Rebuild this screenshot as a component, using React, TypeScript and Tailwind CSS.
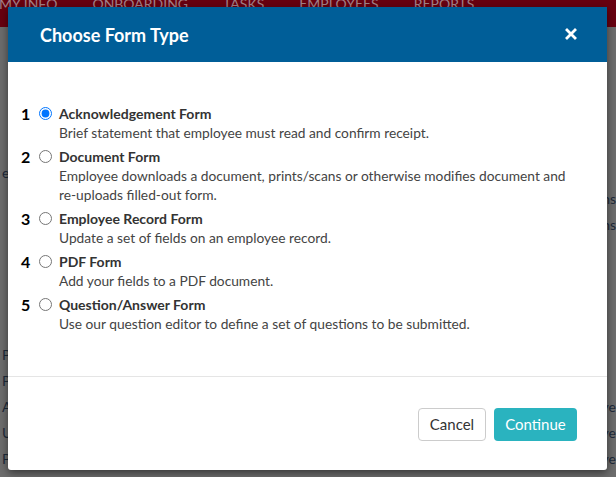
import React from "react";

const items = [
  { n: "1", title: "Acknowledgement Form", desc: ["Brief statement that employee must read and confirm receipt."], checked: true },
  { n: "2", title: "Document Form", desc: ["Employee downloads a document, prints/scans or otherwise modifies document and", "re-uploads filled-out form."] },
  { n: "3", title: "Employee Record Form", desc: ["Update a set of fields on an employee record."] },
  { n: "4", title: "PDF Form", desc: ["Add your fields to a PDF document."] },
  { n: "5", title: "Question/Answer Form", desc: ["Use our question editor to define a set of questions to be submitted."] },
];

const bgRows: [string, string][] = [
  ["es", ""],
  ["", "ns"],
  ["", "ns"],
  ["", ""],
  ["", ""],
  ["", ""],
  ["", ""],
  ["P", ""],
  ["P", ""],
  ["A", "ye"],
  ["U", "ye"],
  ["P", "ye"],
];

export default function App() {
  return (
    <div className="relative w-[616px] h-[477px] overflow-hidden bg-[#6d6d6d]" style={{ fontFamily: "Lato, 'Noto Sans', sans-serif" }}>
      {/* background page (dimmed) */}
      <div className="flex flex-col w-full h-full">
        <div className="h-[27px] bg-[#680010] flex items-start overflow-hidden">
          <div className="flex gap-[35px] text-[14px] leading-[14px] text-[#a38088] -mt-[3px] -ml-[1px] whitespace-nowrap">
            <span>MY INFO</span>
            <span>ONBOARDING</span>
            <span>TASKS</span>
            <span>EMPLOYEES</span>
            <span>REPORTS</span>
          </div>
        </div>
        <div className="flex flex-col pt-[132px] text-[14px] text-[#1e2a3a]">
          {bgRows.map(([l, r], i) => (
            <div key={i} className="h-[26px] flex items-center justify-between">
              <span className="pl-[2px]">{l}</span>
              <span className="pr-0">{r}</span>
            </div>
          ))}
        </div>
      </div>

      {/* modal */}
      <div className="absolute left-[8px] top-[7px] w-[599px] h-[463px] bg-white rounded-b-[3px] shadow-[0_3px_9px_rgba(0,0,0,0.5)] flex flex-col">
        <div className="h-[55px] bg-[#005e98] flex items-center justify-between pl-[32px] pr-[30px]">
          <h2 className="text-white text-[18px] font-bold leading-none mt-[1px]">Choose Form Type</h2>
          <svg width="12" height="12" viewBox="0 0 12 12" className="mt-[-1px]">
            <path d="M2 2 L10 10 M10 2 L2 10" stroke="white" strokeWidth="2.8" strokeLinecap="square" />
          </svg>
        </div>
        <div className="flex-1 flex flex-col gap-[5px] pt-[42px] pl-[13px] border-b border-[#e5e5e5]">
          {items.map((it) => (
            <div key={it.n} className="flex items-start">
              <div className="w-[17px] text-[16px] font-bold text-black leading-[19px]">{it.n}</div>
              <div className="w-[20px] h-[19px] flex items-center justify-start pl-[1px]">
                <input type="radio" name="ft" defaultChecked={!!it.checked} className="w-[13px] h-[13px] m-0" />
              </div>
              <div className="flex flex-col leading-[19px] ml-[1px]">
                <div className="text-[14px] font-bold text-[#333333]">{it.title}</div>
                {it.desc.map((d, i) => (
                  <div key={i} className="text-[13.75px] text-[#444444] whitespace-nowrap">{d}</div>
                ))}
              </div>
            </div>
          ))}
        </div>
        <div className="h-[93px] flex items-start justify-end gap-[8px] pt-[31px] pr-[30px]">
          <button className="h-[33px] w-[68px] border border-[#cccccc] rounded-[4px] text-[15px] text-[#333333] bg-white">Cancel</button>
          <button className="h-[33px] w-[83px] rounded-[4px] text-[15px] text-white bg-[#2ab3bf]">Continue</button>
        </div>
      </div>
    </div>
  );
}
